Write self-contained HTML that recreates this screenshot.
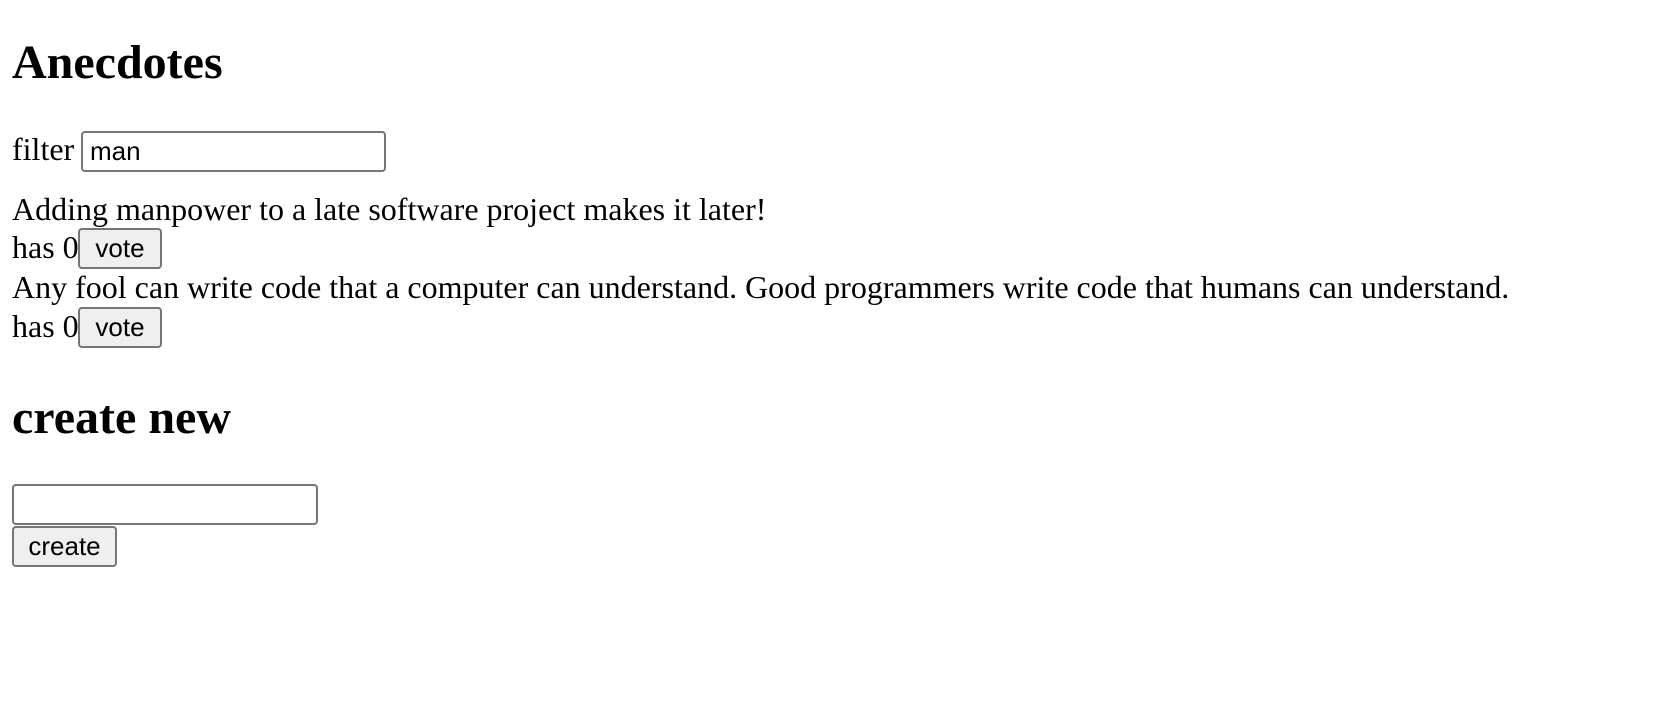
<!DOCTYPE html>
<html><head><style>
body{margin:0;width:1664px;height:708px;background:#fff;font-family:"Liberation Serif",serif;color:#000;position:relative;overflow:hidden}
.a{position:absolute;white-space:nowrap;line-height:1}
.h{font-weight:bold;font-size:48px}
.t{font-size:32px}
.in{position:absolute;border:2px solid #767676;border-radius:4px;background:#fff;box-sizing:border-box;font-family:"Liberation Sans",sans-serif;font-size:26px;padding-left:7px;line-height:37px}
.bt{position:absolute;border:2px solid #767676;border-radius:4px;background:#efefef;box-sizing:border-box;font-family:"Liberation Sans",sans-serif;font-size:26px;text-align:center;line-height:37px}
</style></head><body>
<div class="a h" style="left:12px;top:39px">Anecdotes</div>
<div class="a t" style="left:12px;top:133px">filter</div>
<div class="in" style="left:81px;top:131px;width:305px;height:41px">man</div>
<div class="a t" style="left:12px;top:193px">Adding manpower to a late software project makes it later!</div>
<div class="a t" style="left:12px;top:231px">has 0</div>
<div class="bt" style="left:78px;top:228px;width:84px;height:41px">vote</div>
<div class="a t" style="left:12px;top:271px">Any fool can write code that a computer can understand. Good programmers write code that humans can understand.</div>
<div class="a t" style="left:12px;top:310px">has 0</div>
<div class="bt" style="left:78px;top:307px;width:84px;height:41px">vote</div>
<div class="a h" style="left:12px;top:394px">create new</div>
<div class="in" style="left:12px;top:484px;width:306px;height:41px"></div>
<div class="bt" style="left:12px;top:526px;width:105px;height:41px">create</div>
</body></html>
